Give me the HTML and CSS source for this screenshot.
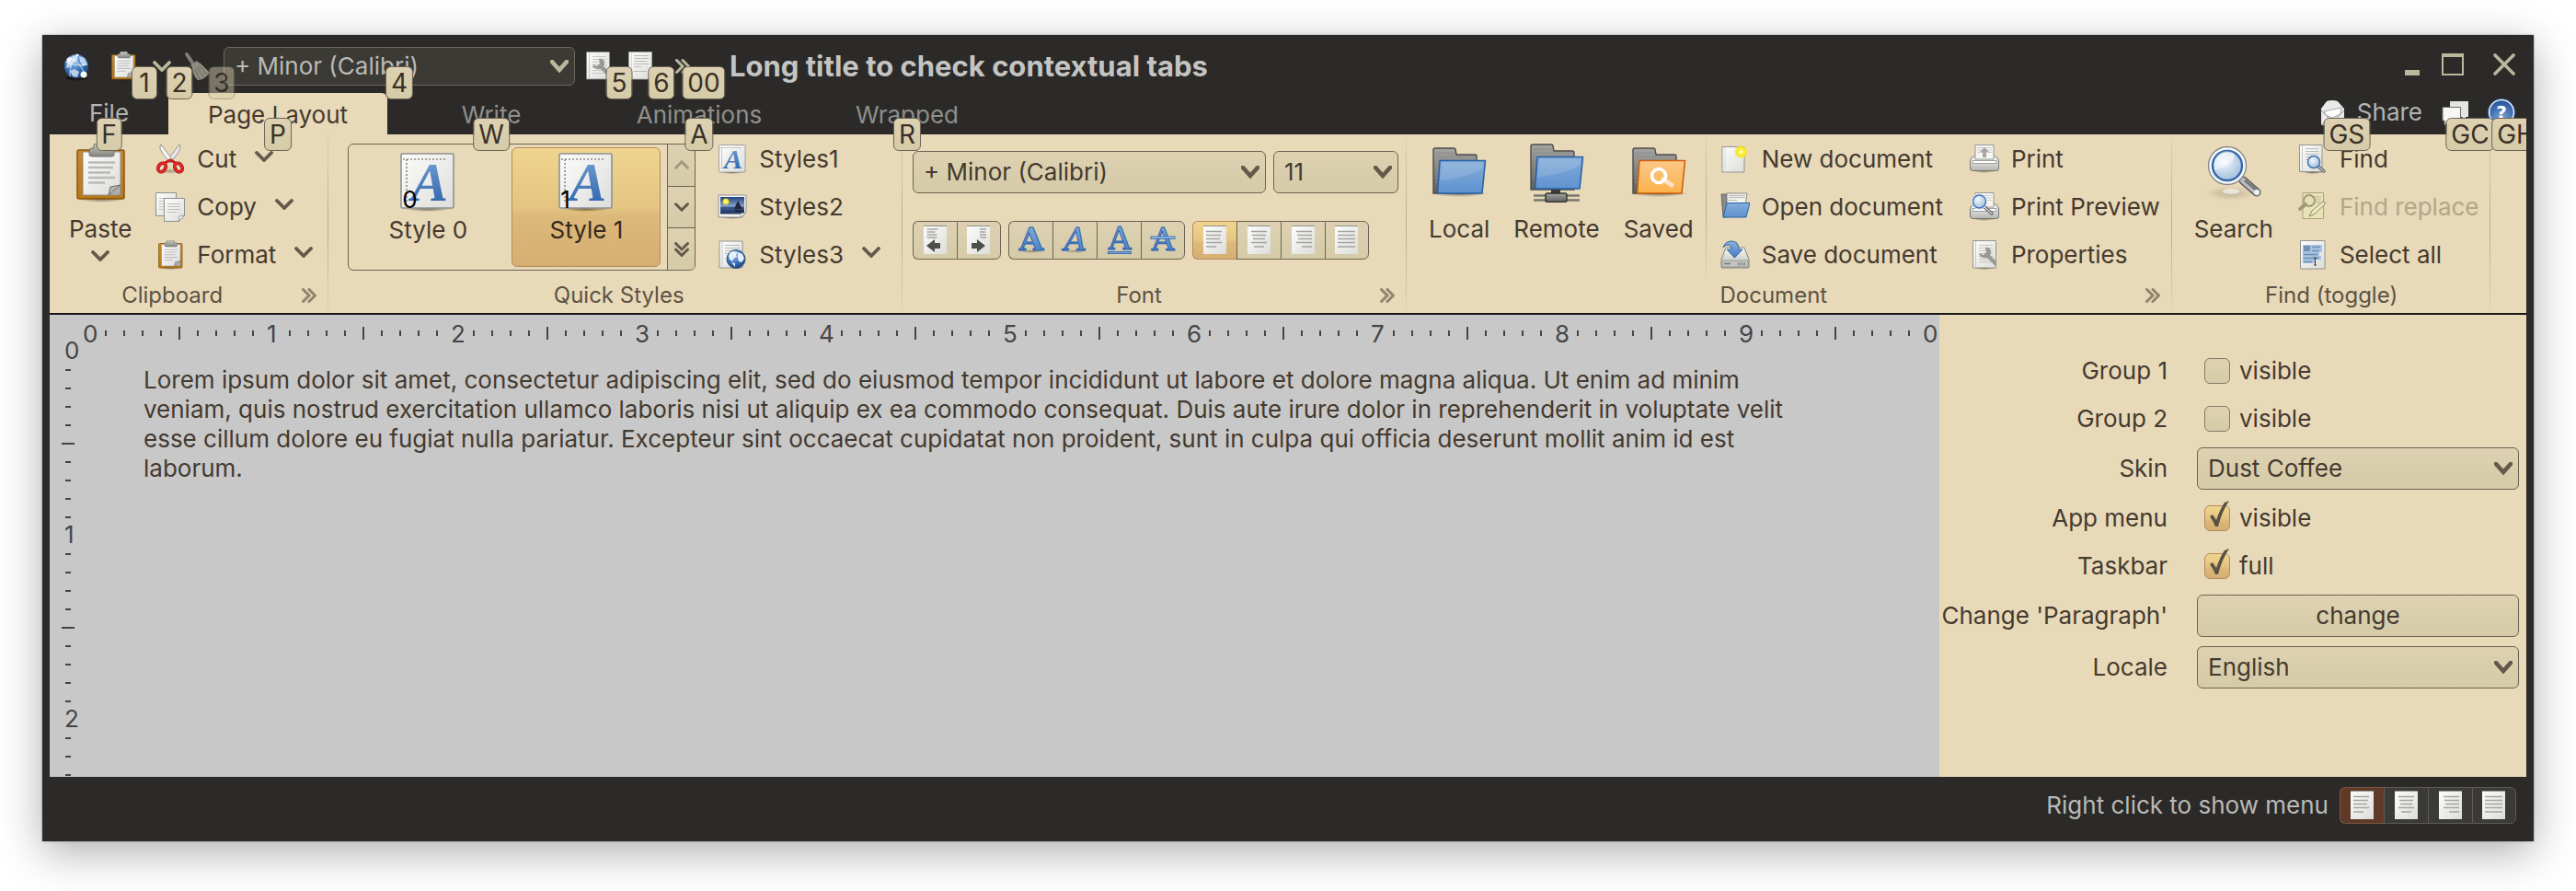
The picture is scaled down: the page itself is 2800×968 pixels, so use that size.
FILE: index.html
```html
<!DOCTYPE html>
<html lang="en">
<head>
<meta charset="utf-8">
<title>Long title to check contextual tabs</title>
<link rel="stylesheet" href="styles.css">
</head>
<body>
<svg class="sprite" aria-hidden="true">
  <defs>
    <linearGradient id="g-paper" x1="0" y1="0" x2="1" y2="1"><stop offset="0" stop-color="#fdfdfc"/><stop offset="1" stop-color="#dcdcd9"/></linearGradient>
    <linearGradient id="g-board" x1="0" y1="0" x2="0" y2="1"><stop offset="0" stop-color="#c58a2e"/><stop offset="1" stop-color="#b87818"/></linearGradient>
    <linearGradient id="g-clip" x1="0" y1="0" x2="0" y2="1"><stop offset="0" stop-color="#c9cac3"/><stop offset="1" stop-color="#83857d"/></linearGradient>
    <linearGradient id="g-blue" x1="0" y1="0" x2="0" y2="1"><stop offset="0" stop-color="#8db4de"/><stop offset="1" stop-color="#3f79c4"/></linearGradient>
    <linearGradient id="g-letter" x1="0" y1="0" x2="0" y2="1"><stop offset="0" stop-color="#7ba5d6"/><stop offset="1" stop-color="#245ca6"/></linearGradient>
    <linearGradient id="g-folder" x1="0" y1="0" x2="0" y2="1"><stop offset="0" stop-color="#84add8"/><stop offset="1" stop-color="#5f92d0"/></linearGradient>
    <linearGradient id="g-orange" x1="0" y1="0" x2="0" y2="1"><stop offset="0" stop-color="#fcc887"/><stop offset="1" stop-color="#fbb24c"/></linearGradient>
    <linearGradient id="g-gray" x1="0" y1="0" x2="0" y2="1"><stop offset="0" stop-color="#a5a5a3"/><stop offset="1" stop-color="#5e5e5c"/></linearGradient>
    <linearGradient id="g-drive" x1="0" y1="0" x2="0" y2="1"><stop offset="0" stop-color="#fafafa"/><stop offset="1" stop-color="#b4b4b0"/></linearGradient>
    <linearGradient id="g-photo" x1="0" y1="0" x2="0" y2="1"><stop offset="0" stop-color="#24437c"/><stop offset=".55" stop-color="#8aa3c9"/><stop offset=".6" stop-color="#3c5a90"/><stop offset="1" stop-color="#1d355f"/></linearGradient>
    <radialGradient id="g-globe" cx=".4" cy=".3" r=".8"><stop offset="0" stop-color="#9cc3ee"/><stop offset=".5" stop-color="#3b74bc"/><stop offset="1" stop-color="#16386f"/></radialGradient>
    <radialGradient id="g-help" cx=".5" cy=".8" r=".8"><stop offset="0" stop-color="#7fa8da"/><stop offset="1" stop-color="#1f4f96"/></radialGradient>
    <radialGradient id="g-sun"><stop offset="0" stop-color="#fff"/><stop offset=".35" stop-color="#fbf23c"/><stop offset=".7" stop-color="#f3e72b"/><stop offset="1" stop-color="#f3e72b" stop-opacity="0"/></radialGradient>
    <radialGradient id="g-lens" cx=".4" cy=".35" r=".7"><stop offset="0" stop-color="#f2f7fb"/><stop offset="1" stop-color="#9fbddd"/></radialGradient>
    <radialGradient id="g-shade"><stop offset="0" stop-color="#000" stop-opacity=".5"/><stop offset="1" stop-color="#000" stop-opacity="0"/></radialGradient>
  </defs>

  <symbol id="i-clipboard" viewBox="0 0 64 64">
    <ellipse cx="33" cy="60" rx="26" ry="4" fill="url(#g-shade)"/>
    <rect x="7" y="7" width="51" height="53" rx="2" fill="url(#g-board)" stroke="#87560e" stroke-width="1.5"/>
    <path d="M13 9h41v47H13z" fill="url(#g-paper)" stroke="#8f8b80"/>
    <path d="M19 20.500h29M19 26h27M19 31.500h24M19 37h29M19 42.500h18" stroke="#b9b9b7" stroke-width="2.400"/>
    <path d="M41 56l2-9 11-2z" fill="#b5b5b2" stroke="#6b6b68"/><path d="M54 45v11H41z" fill="#80807d" opacity=".5"/>
    <path d="M25 5V2q0-2 2-2h12q2 0 2 2v3h4q2 0 2 3v4q0 2-3 2H23q-3 0-3-2V8q0-3 2-3z" fill="url(#g-clip)" stroke="#6e7069"/>
  </symbol>

  <symbol id="i-cut" viewBox="0 0 32 32">
    <ellipse cx="16" cy="29" rx="11" ry="3" fill="url(#g-shade)" opacity=".6"/>
    <path d="M26 0c2 3 1 5-2 10l-8 10-3-3z" fill="#e9e9e7" stroke="#8a8a86" stroke-width=".9"/>
    <path d="M6 0c-2 3-1 5 2 10l8 10 3-3z" fill="#f6f6f5" stroke="#8a8a86" stroke-width=".9"/>
    <ellipse cx="7" cy="25" rx="3.800" ry="5" transform="rotate(32 7 25)" fill="none" stroke="#a40e0e" stroke-width="3.800"/>
    <ellipse cx="25" cy="25" rx="3.800" ry="5" transform="rotate(-32 25 25)" fill="none" stroke="#a40e0e" stroke-width="3.800"/>
    <path d="M10 20l6-3 6 3" fill="none" stroke="#c81b1b" stroke-width="3"/>
    <ellipse cx="7" cy="25" rx="3.800" ry="5" transform="rotate(32 7 25)" fill="none" stroke="#e42a2a" stroke-width="2.400"/>
    <ellipse cx="25" cy="25" rx="3.800" ry="5" transform="rotate(-32 25 25)" fill="none" stroke="#e42a2a" stroke-width="2.400"/>
  </symbol>

  <symbol id="i-copy" viewBox="0 0 32 32">
    <path d="M.5.500H22.500V25.500H.500z" fill="url(#g-paper)" stroke="#8f8f8c"/>
    <path d="M4 6.500h12M4 9.500h12M4 12.500h12M4 15.500h12M4 18.500h12" stroke="#c4c4c2"/>
    <path d="M9.500 6.500H31.500V25l-6 6.500H9.500z" fill="url(#g-paper)" stroke="#8f8f8c"/>
    <path d="M13 12.500h14M13 15.500h13M13 18.500h14M13 21.500h10" stroke="#bdbdbb"/>
    <path d="M25 31.500l1-5.500 5.500-1z" fill="#fff" stroke="#7c8a93" stroke-width=".8"/>
  </symbol>

  <symbol id="i-sheet" viewBox="0 0 32 32">
    <ellipse cx="16" cy="30.500" rx="13" ry="1.500" fill="url(#g-shade)"/>
    <rect x="1.500" y=".5" width="28.500" height="29.500" rx=".8" fill="url(#g-paper)" stroke="#8d9194" stroke-width=".8"/>
    <path d="M2.500 3.500h24M4.500 3.500v23" stroke="#8a8a88" stroke-width=".8" stroke-dasharray="1 1"/>
  </symbol>

  <symbol id="i-photo" viewBox="0 0 32 32">
    <ellipse cx="16" cy="27" rx="14" ry="2" fill="url(#g-shade)"/>
    <path d="M1 3h30v19l-5 5H1z" fill="#f4f4f2" stroke="#84848a" stroke-width=".9"/>
    <rect x="3" y="5" width="26" height="18.500" fill="url(#g-photo)"/>
    <circle cx="9" cy="10" r="4" fill="url(#g-sun)"/>
    <path d="M22 9l5 9h-9zM17 19h12l-2 2h-7z" fill="#20293a"/>
    <path d="M25 27v-4l6-1z" fill="#fff" stroke="#8a8a8a" stroke-width=".7"/>
  </symbol>

  <symbol id="i-web" viewBox="0 0 32 32">
    <path d="M2 1h25v29H2z" fill="url(#g-paper)" stroke="#8a8a88" stroke-width=".9"/>
    <path d="M5 1v29" stroke="#c9c9c7"/><path d="M8 5.500h16M8 8.500h16M8 11.500h16M8 14.500h8" stroke="#bcbcba"/>
    <circle cx="20" cy="20.500" r="10" fill="url(#g-globe)" stroke="#2b5086"/>
    <path d="M12 17q1-5 6-5l4 1-2 3 1 2-3 1-2 4-3-2zM22 13l5 2 2 5-3 4-3-1-1-4zM15 24l4 1v4z" fill="#eef4fa" opacity=".95"/>
  </symbol>

  <symbol id="i-folder-back" viewBox="0 0 64 64">
    <path d="M4 54V7q0-2 2-2h20q2 0 2 2l1 5h20q2 0 2 2v40z" fill="url(#g-gray)" stroke="#4c4c4a" stroke-width="1.400"/>
    <path d="M6 10h20M6 14h44M6 18h44M6 22h7M6 26h6M6 30h5M6 34h4M6 38h4M6 42h3" stroke="#8c8c8a"/>
  </symbol>
  <symbol id="i-local" viewBox="0 0 64 64">
    <ellipse cx="32" cy="54" rx="31" ry="4" fill="url(#g-shade)"/>
    <use href="#i-folder-back" width="64" height="64"/>
    <path d="M11 18.500h49.500L57 54H8.500z" fill="url(#g-folder)" stroke="#2a62a8" stroke-width="1.600" stroke-linejoin="round"/>
    <path d="M13 20.500h45l-1 7q-14 9-46 13z" fill="#fff" opacity=".13"/>
  </symbol>
  <symbol id="i-remote" viewBox="0 0 64 64">
    <g transform="translate(0 -4)">
      <use href="#i-folder-back" width="64" height="64"/>
      <path d="M11 18.500h49.500L57 53H8.500z" fill="url(#g-folder)" stroke="#2a62a8" stroke-width="1.600" stroke-linejoin="round"/>
      <path d="M13 20.500h45l-1 7q-14 9-46 13z" fill="#fff" opacity=".13"/>
    </g>
    <path d="M7 56.500h50M7 61.500h50" stroke="#77776f" stroke-width="2.400"/>
    <path d="M26 50h10v5H26z" fill="#3b3b38"/>
    <rect x="20" y="54" width="23" height="9.500" rx="2" fill="url(#g-gray)" stroke="#2f2f2d" stroke-width="1.400"/>
  </symbol>
  <symbol id="i-saved" viewBox="0 0 64 64">
    <ellipse cx="32" cy="54" rx="31" ry="4" fill="url(#g-shade)"/>
    <use href="#i-folder-back" width="64" height="64"/>
    <path d="M11 18.500h49.500L57 54H8.500z" fill="url(#g-orange)" stroke="#cf6008" stroke-width="1.600" stroke-linejoin="round"/>
    <path d="M37 39l9 6" stroke="#fde3c2" stroke-width="5" stroke-linecap="round"/>
    <circle cx="32" cy="35" r="7.500" fill="none" stroke="#fff" stroke-width="3.600"/>
  </symbol>

  <symbol id="i-new" viewBox="0 0 32 32">
    <path d="M2 2.500h24V30H2z" fill="url(#g-paper)" stroke="#8a8a88" stroke-width=".9"/>
    <path d="M5 3v27" stroke="#d8d8d6"/><circle cx="22.500" cy="8" r="7.500" fill="url(#g-sun)"/>
  </symbol>
  <symbol id="i-open" viewBox="0 0 32 32">
    <path d="M1 2h6v25H3z" fill="#8a8a87" stroke="#555" stroke-width=".8"/>
    <path d="M7 1h22l-2 14-20 12z" fill="#f2f2f0" stroke="#7d7d7a" stroke-width=".9"/>
    <path d="M9 3.500h18M9 5.500h18M8 8.500h10" stroke="#b5b5b3"/>
    <path d="M7 11.500h25L28 27H3z" fill="url(#g-folder)" stroke="#2a62a8" stroke-linejoin="round"/>
  </symbol>
  <symbol id="i-save" viewBox="0 0 32 32">
    <path d="M6 8h20l5 13v8q0 1-1 1H2q-1 0-1-1v-8z" fill="url(#g-drive)" stroke="#7b7b78" stroke-width=".9"/>
    <path d="M2 22h28v7H2z" fill="#c3c3bf" stroke="#8c8c88" stroke-width=".7"/><path d="M4 25.500h7M20 24v3.500M23 24v3.500M26 24v3.500" stroke="#777" stroke-width="1.300"/>
    <path d="M3 8Q5 1 12 1q8 0 8 9h4l-8.500 9L7 10h5q0-5-4-5-3 0-5 3z" fill="url(#g-blue)" stroke="#2b5a9c" stroke-width=".9"/>
  </symbol>
  <symbol id="i-printer" viewBox="0 0 32 32">
    <ellipse cx="16" cy="28.500" rx="13" ry="2.500" fill="url(#g-shade)"/>
    <path d="M4 13h24q3 1 3.500 5v8q0 2.500-2.500 2.500H3Q.5 28.500.5 26v-8Q1 14 4 13z" fill="url(#g-drive)" stroke="#6f6f6c" stroke-width=".9"/>
    <path d="M6 .5h20V16H6z" fill="#f5f5f4" stroke="#90908d" stroke-width=".9"/>
    <path d="M3 17.500h26v3H3z" fill="#fff" stroke="#8c8c88" stroke-width=".8"/>
    <path d="M8 3.500h16M8 6h16M8 8.500h16" stroke="#cbcbc9"/>
  </symbol>
  <symbol id="i-print" viewBox="0 0 32 32">
    <use href="#i-printer" width="32" height="32"/>
    <path d="M16 3l5 5h-3v6h-4V8h-3z" fill="#a5a5a2"/>
  </symbol>
  <symbol id="i-preview" viewBox="0 0 32 32">
    <use href="#i-printer" width="32" height="32"/>
    <path d="M15 15l9 8" stroke="#55585a" stroke-width="3.400" stroke-linecap="round"/><path d="M16 16l8 7" stroke="#d4d6d6" stroke-width="1.600" stroke-linecap="round"/>
    <circle cx="10.500" cy="10" r="7.500" fill="url(#g-lens)" stroke="#ecf1f5" stroke-width="2.400"/><circle cx="10.500" cy="10" r="7" fill="none" stroke="#3f72b4" stroke-width="1.500"/>
  </symbol>
  <symbol id="i-props" viewBox="0 0 32 32">
    <ellipse cx="16" cy="30.500" rx="12" ry="1.500" fill="url(#g-shade)"/>
    <path d="M3.500.500h25v29.500h-25z" fill="url(#g-paper)" stroke="#8a8a88" stroke-width=".9"/>
    <path d="M6.500 1v29" stroke="#c9c9c7"/><path d="M10 5.500h15M10 8.500h15M10 11.500h15M10 14.500h15M10 17.500h15M10 20.500h15M10 23.500h15" stroke="#c6c6c4"/>
    <path d="M17 8q5-1 6 4 0 3-1 4l6 6v6l-9-9q-5 1-8-2l-1-3 5 2 3-3z" fill="#989896"/>
  </symbol>
  <symbol id="i-doc" viewBox="0 0 32 32">
    <path d="M3.500.500h25v29.500h-25z" fill="url(#g-paper)" stroke="#a5a5a3" stroke-width=".9"/>
    <path d="M6.500 1v29" stroke="#d5d5d3"/><path d="M9 4.500h16M9 7.500h16M9 10.500h14M9 13.500h16M9 16.500h8M9 21.500h14" stroke="#b9b9b7"/>
  </symbol>

  <symbol id="i-search" viewBox="0 0 64 64">
    <ellipse cx="28" cy="54" rx="27" ry="8" fill="url(#g-shade)" opacity=".35"/><ellipse cx="29" cy="52" rx="9" ry="3" fill="#fff" opacity=".6"/>
    <path d="M42 40l15 13" stroke="#4e5052" stroke-width="9" stroke-linecap="round"/><path d="M42 40l15 13" stroke="#b9bbbc" stroke-width="6.500" stroke-linecap="round"/><path d="M44 40l13 11" stroke="#717375" stroke-width="2.500"/>
    <circle cx="57" cy="53" r="3" fill="#f0f0f0"/>
    <circle cx="25" cy="24" r="20.500" fill="#f6f6f6" stroke="#85888a" stroke-width="1.300"/>
    <circle cx="25" cy="24" r="16" fill="url(#g-lens)" stroke="#3569ac" stroke-width="2.400"/>
    <path d="M11 25a14 14 0 0 1 22-14q2 11-22 18z" fill="#fff" opacity=".5"/>
  </symbol>
  <symbol id="i-find" viewBox="0 0 32 32">
    <ellipse cx="16" cy="30.500" rx="12" ry="1.500" fill="url(#g-shade)"/>
    <path d="M1.500.500h24.500v29h-24.500z" fill="url(#g-paper)" stroke="#8a8a88" stroke-width=".9"/>
    <path d="M4.500 1v28" stroke="#c9c9c7"/><path d="M8 4.500h14M8 7.500h14M8 10.500h14M8 13.500h10M8 16.500h6" stroke="#bcbcba"/>
    <path d="M22 24l6 5" stroke="#55585a" stroke-width="3.400" stroke-linecap="round"/><path d="M22 24l6 5" stroke="#c4c6c6" stroke-width="1.600" stroke-linecap="round"/>
    <circle cx="17" cy="19" r="6.500" fill="url(#g-lens)" stroke="#3f72b4" stroke-width="1.500"/>
  </symbol>
  <symbol id="i-replace" viewBox="0 0 32 32">
    <path d="M5 .5h22.500v28H5z" fill="#e9e3b8" stroke="#a39b78" stroke-width=".9"/>
    <path d="M16 5h9M18 8h7M18 11h6" stroke="#b5ae8b"/>
    <circle cx="12" cy="9" r="6" fill="#e6dfb5" stroke="#9f9876" stroke-width="1.800"/><path d="M8 13l-6 5" stroke="#9f9876" stroke-width="3.600" stroke-linecap="round"/>
    <path d="M12 26l3-6L27 10q3 0 2 3L17 24z" fill="#efe9c4" stroke="#8f8868"/>
  </symbol>
  <symbol id="i-select" viewBox="0 0 32 32">
    <path d="M2.500.500H29V31H2.500z" fill="url(#g-paper)" stroke="#8a8a88" stroke-width=".9"/>
    <path d="M5 5h21v8h-3v4h2v4h-7v4H5z" fill="#a9c3e0"/><path d="M6 6h7v6H6z" fill="#7590b0"/>
    <path d="M15 7.500h9M15 11.500h8M6 15.500h15M6 19.500h17M6 23.500h9" stroke="#6f90b8" stroke-width="1.300"/><path d="M18.500 19v8M17 19h3M17 27h3" stroke="#3c3c3c"/>
  </symbol>

  <symbol id="i-outdent" viewBox="0 0 32 32">
    <path d="M3 1h25v30H3z" fill="url(#g-paper)"/><path d="M3 .5h25" stroke="#8f8f8a"/>
    <path d="M6.500 4h12M6.500 7h9M6.500 10h11M6.500 13h11" stroke="#7c7c7a" stroke-width="1.200"/><path d="M6 22l9-7v4h6v6h-6v4z" fill="#4d4f4b"/>
  </symbol>
  <symbol id="i-indent" viewBox="0 0 32 32">
    <path d="M3 1h25v30H3z" fill="url(#g-paper)"/><path d="M3 .5h25" stroke="#8f8f8a"/>
    <path d="M17 4h7M17 7h6M17 10h7M17 13h7" stroke="#7c7c7a" stroke-width="1.200"/><path d="M23 22l-9-7v4H8v6h6v4z" fill="#4d4f4b"/>
  </symbol>
  <symbol id="i-left" viewBox="0 0 32 32"><path d="M3 1h25v30H3z" fill="url(#g-paper)"/><path d="M3 .5h25" stroke="#8f8f8a"/><path d="M6 6.500h17M6 10.500h16M6 14.500h15M6 18.500h17M6 23h11" stroke="#a3a3a1" stroke-width="1.700"/></symbol>
  <symbol id="i-center" viewBox="0 0 32 32"><path d="M3 1h25v30H3z" fill="url(#g-paper)"/><path d="M3 .5h25" stroke="#8f8f8a"/><path d="M7 6.500h17M8 10.500h15M9 14.500h13M7 18.500h17M10 23h11" stroke="#a3a3a1" stroke-width="1.700"/></symbol>
  <symbol id="i-right" viewBox="0 0 32 32"><path d="M3 1h25v30H3z" fill="url(#g-paper)"/><path d="M3 .5h25" stroke="#8f8f8a"/><path d="M8 6.500h17M9 10.500h16M10 14.500h15M8 18.500h17M14 23h11" stroke="#a3a3a1" stroke-width="1.700"/></symbol>
  <symbol id="i-justify" viewBox="0 0 32 32"><path d="M3 1h25v30H3z" fill="url(#g-paper)"/><path d="M3 .5h25" stroke="#8f8f8a"/><path d="M6 6.500h19M6 10.500h19M6 14.500h19M6 18.500h19M6 23h19" stroke="#a3a3a1" stroke-width="1.700"/></symbol>

  <symbol id="i-globe" viewBox="0 0 32 32">
    <ellipse cx="16" cy="29" rx="12" ry="2.500" fill="#000" opacity=".4"/>
    <circle cx="16" cy="16" r="13" fill="url(#g-globe)"/>
    <path d="M6 11q3-6 9-7l3 3-2 4-4 1-3 5-4 1zM19 5l6 2 3 7-5 2-3-5zM9 21l5-2 5 3-2 6-5-1z" fill="#dbe9f7" opacity=".8"/>
    <path d="M4 11q12 6 24 3M9 27Q8 14 17 4M8 6q14 6 17 20" fill="none" stroke="#fff" stroke-width=".8" opacity=".9"/>
    <circle cx="24" cy="25" r="3.500" fill="#fff" opacity=".95"/><circle cx="8" cy="9" r="2.500" fill="#fff" opacity=".9"/><circle cx="17" cy="4" r="1.500" fill="#fff"/>
  </symbol>
  <symbol id="i-broom" viewBox="0 0 32 32">
    <path d="M5 3l8 12" stroke="#7e7e74" stroke-width="4" stroke-linecap="round"/>
    <path d="M9 15l7-5 4 4-7 6z" fill="#8b8b81"/><path d="M11 18l8-6 11 11q-6 8-13 8-5-4-6-13z" fill="#8d8d81"/>
    <path d="M14 19l5 11M16 17l8 11M18 15l9 10" stroke="#66665d"/>
  </symbol>
  <symbol id="i-mail" viewBox="0 0 32 32">
    <path d="M4 12L10 4q2-1 6-1t6 1l7 8v18H4z" fill="#e9e9e7"/><path d="M7 15l19-4-1 7-9 4-7-3z" fill="#fff" stroke="#a5a5a3"/>
    <path d="M4 14l9 9-9 7M29 14l-9 9 9 7" fill="none" stroke="#9c9c9a"/>
  </symbol>
  <symbol id="i-chat" viewBox="0 0 32 32">
    <path d="M10 4h20v17h-3v4l-4-4H10z" fill="#e4e4e2"/><path d="M2 10.500h19.500V25H9l-5 5v-5H2z" fill="#f7f7f6" stroke="#6e6e6c"/>
  </symbol>

  <symbol id="i-down" viewBox="0 0 20 12"><path d="M2 2l8 8 8-8" fill="none" stroke="currentColor" stroke-width="3.800" stroke-linecap="round"/></symbol>
  <symbol id="i-up" viewBox="0 0 20 12"><path d="M2 10l8-8 8 8" fill="none" stroke="currentColor" stroke-width="3.800" stroke-linecap="round"/></symbol>
  <symbol id="i-drop" viewBox="0 0 20 14"><path d="M2 2l8 9 8-9" fill="none" stroke="currentColor" stroke-width="4.600" stroke-linecap="round"/></symbol>
  <symbol id="i-more" viewBox="0 0 16 16"><path d="M1.500 1.500L8 8l-6.500 6.500M8 1.500L14.500 8 8 14.500" fill="none" stroke="currentColor" stroke-width="3" stroke-linecap="round"/></symbol>
  <symbol id="i-expand" viewBox="0 0 16 16"><path d="M1.500 1.500L8 8l6.500-6.500M1.500 8L8 14.500 14.500 8" fill="none" stroke="currentColor" stroke-width="3" stroke-linecap="round"/></symbol>
  <symbol id="i-check" viewBox="0 0 28 34"><path d="M6 17l3-2 4 6Q18 7 22 2l5-2Q19 12 15 28h-3Q9 21 6 17z" fill="currentColor"/></symbol>
</svg>

<div class="window">
  <header class="titlebar">
    <button class="slot slot-app" aria-label="Application"><svg class="icon"><use href="#i-globe"/></svg></button>
    <button class="slot" aria-label="Paste"><svg class="icon"><use href="#i-clipboard"/></svg><kbd class="tip tip-edge">1</kbd></button>
    <button class="slot slot-arrow" aria-label="Paste options"><svg class="chev"><use href="#i-down"/></svg><kbd class="tip tip-edge">2</kbd></button>
    <button class="slot slot-broom" aria-label="Format painter" disabled><svg class="icon"><use href="#i-broom"/></svg><kbd class="tip tip-edge">3</kbd></button>
    <div class="combo combo-dark">
      <select aria-label="Quick font"><option>+ Minor (Calibri)</option></select>
      <svg class="drop"><use href="#i-drop"/></svg><kbd class="tip tip-mid">4</kbd>
    </div>
    <button class="slot" aria-label="Properties"><svg class="icon"><use href="#i-props"/></svg><kbd class="tip tip-edge">5</kbd></button>
    <button class="slot" aria-label="Document"><svg class="icon"><use href="#i-doc"/></svg><kbd class="tip tip-edge">6</kbd></button>
    <button class="slot" aria-label="More"><svg class="more"><use href="#i-more"/></svg><kbd class="tip tip-edge">00</kbd></button>
    <h1 class="title">Long title to check contextual tabs</h1>
    <div class="win-buttons">
      <button aria-label="Minimize"><svg width="24" height="24"><path d="M8 18h16v6H8z" fill="currentColor"/></svg></button>
      <button aria-label="Maximize"><svg width="24" height="24"><path d="M0 0h24v24H0zM2 4v18h20V4z" fill="currentColor" fill-rule="evenodd"/></svg></button>
      <button class="close" aria-label="Close"><svg width="24" height="24"><path d="M2 2l20 20M22 2L2 22" stroke="currentColor" stroke-width="3.600" stroke-linecap="round"/></svg></button>
    </div>
  </header>

  <nav class="tabs" role="tablist">
    <button class="tab tab-file">File<kbd class="tip tip-mid">F</kbd></button>
    <button class="tab tab-active" role="tab" aria-selected="true">Page Layout<kbd class="tip tip-mid">P</kbd></button>
    <button class="tab" role="tab">Write<kbd class="tip tip-mid">W</kbd></button>
    <button class="tab" role="tab">Animations<kbd class="tip tip-mid">A</kbd></button>
    <button class="tab" role="tab">Wrapped<kbd class="tip tip-mid">R</kbd></button>
    <div class="tools">
      <button class="tool tool-share"><span class="slot-tool"><svg class="icon"><use href="#i-mail"/></svg><kbd class="tip tip-edge">GS</kbd></span>Share</button>
      <button class="tool" aria-label="Comments"><span class="slot-tool"><svg class="icon"><use href="#i-chat"/></svg><kbd class="tip tip-edge">GC</kbd></span></button>
      <button class="tool" aria-label="Help"><span class="slot-tool"><svg class="icon" viewBox="0 0 32 32"><circle cx="16" cy="16" r="13.500" fill="url(#g-help)" stroke="#f4f6f8" stroke-width="1.600"/><circle cx="16" cy="16" r="14.800" fill="none" stroke="#2f5f9f"/><text class="glyph-help" x="16" y="23">?</text></svg><kbd class="tip tip-edge">GH</kbd></span></button>
    </div>
  </nav>

  <section class="ribbon">
    <div class="group group-clipboard">
      <div class="body">
        <button class="large"><svg class="icon-lg"><use href="#i-clipboard"/></svg><span>Paste</span><svg class="chev"><use href="#i-down"/></svg></button>
        <div class="list">
          <button class="row"><svg class="icon"><use href="#i-cut"/></svg>Cut<svg class="chev"><use href="#i-down"/></svg></button>
          <button class="row"><svg class="icon"><use href="#i-copy"/></svg>Copy<svg class="chev"><use href="#i-down"/></svg></button>
          <button class="row"><svg class="icon"><use href="#i-clipboard"/></svg>Format<svg class="chev"><use href="#i-down"/></svg></button>
        </div>
      </div>
      <footer class="foot"><span>Clipboard</span><button class="launch" aria-label="Clipboard options"><svg class="more"><use href="#i-more"/></svg></button></footer>
    </div>

    <div class="group group-styles">
      <div class="body">
        <div class="gallery">
          <div class="items">
            <button class="style"><span class="thumb"><svg class="icon-lg" viewBox="0 0 32 32"><use href="#i-sheet" width="32" height="32"/><text class="glyph-style" x="17" y="26">A</text></svg><b>0</b></span>Style 0</button>
            <button class="style style-on"><span class="thumb"><svg class="icon-lg" viewBox="0 0 32 32"><use href="#i-sheet" width="32" height="32"/><text class="glyph-style" x="17" y="26">A</text></svg><b>1</b></span>Style 1</button>
          </div>
          <div class="scroll">
            <button aria-label="Up" disabled><svg class="arrow"><use href="#i-up"/></svg></button>
            <button aria-label="Down"><svg class="arrow"><use href="#i-down"/></svg></button>
            <button aria-label="Expand"><svg class="more"><use href="#i-expand"/></svg></button>
          </div>
        </div>
        <div class="list">
          <button class="row"><svg class="icon" viewBox="0 0 32 32"><use href="#i-sheet" width="32" height="32"/><text class="glyph-style" x="17" y="26">A</text></svg>Styles1</button>
          <button class="row"><svg class="icon"><use href="#i-photo"/></svg>Styles2</button>
          <button class="row"><svg class="icon"><use href="#i-web"/></svg>Styles3<svg class="chev"><use href="#i-down"/></svg></button>
        </div>
      </div>
      <footer class="foot"><span>Quick Styles</span></footer>
    </div>

    <div class="group group-font">
      <div class="body body-font">
        <div class="line">
          <div class="combo combo-face"><select aria-label="Font"><option>+ Minor (Calibri)</option></select><svg class="drop"><use href="#i-drop"/></svg></div>
          <div class="combo combo-size"><select aria-label="Size"><option>11</option></select><svg class="drop"><use href="#i-drop"/></svg></div>
        </div>
        <div class="line">
          <div class="set"><button aria-label="Outdent"><svg class="icon"><use href="#i-outdent"/></svg></button><button aria-label="Indent"><svg class="icon"><use href="#i-indent"/></svg></button></div>
          <div class="set">
            <button aria-label="Bold"><svg class="icon" viewBox="0 0 32 32"><ellipse cx="16" cy="28" rx="13" ry="2" fill="url(#g-shade)" opacity=".6"/><text class="glyph-font glyph-bold" x="16" y="27">A</text></svg></button>
            <button aria-label="Italic"><svg class="icon" viewBox="0 0 32 32"><ellipse cx="16" cy="28" rx="13" ry="2" fill="url(#g-shade)" opacity=".6"/><text class="glyph-font glyph-italic" x="16" y="27">A</text></svg></button>
            <button aria-label="Underline"><svg class="icon" viewBox="0 0 32 32"><text class="glyph-font" x="16" y="26">A</text><rect x="3.500" y="28.500" width="25" height="2" fill="#7ea7dc" stroke="#2a5fae" stroke-width=".8"/></svg></button>
            <button aria-label="Strike"><svg class="icon" viewBox="0 0 32 32"><text class="glyph-font" x="16" y="27">A</text><rect x="3" y="12" width="26" height="2.400" fill="#9dbfe8" stroke="#2a5fae" stroke-width=".8"/></svg></button>
          </div>
          <div class="set"><button class="on" aria-label="Left"><svg class="icon"><use href="#i-left"/></svg></button><button aria-label="Center"><svg class="icon"><use href="#i-center"/></svg></button><button aria-label="Right"><svg class="icon"><use href="#i-right"/></svg></button><button aria-label="Justify"><svg class="icon"><use href="#i-justify"/></svg></button></div>
        </div>
      </div>
      <footer class="foot"><span>Font</span><button class="launch" aria-label="Font options"><svg class="more"><use href="#i-more"/></svg></button></footer>
    </div>

    <div class="group group-document">
      <div class="body">
        <button class="large"><svg class="icon-lg"><use href="#i-local"/></svg><span>Local</span></button>
        <button class="large"><svg class="icon-lg"><use href="#i-remote"/></svg><span>Remote</span></button>
        <button class="large"><svg class="icon-lg"><use href="#i-saved"/></svg><span>Saved</span></button>
        <div class="list list-split">
          <button class="row"><svg class="icon"><use href="#i-new"/></svg>New document</button>
          <button class="row"><svg class="icon"><use href="#i-open"/></svg>Open document</button>
          <button class="row"><svg class="icon"><use href="#i-save"/></svg>Save document</button>
        </div>
        <div class="list">
          <button class="row"><svg class="icon"><use href="#i-print"/></svg>Print</button>
          <button class="row"><svg class="icon"><use href="#i-preview"/></svg>Print Preview</button>
          <button class="row"><svg class="icon"><use href="#i-props"/></svg>Properties</button>
        </div>
      </div>
      <footer class="foot"><span>Document</span><button class="launch" aria-label="Document options"><svg class="more"><use href="#i-more"/></svg></button></footer>
    </div>

    <div class="group group-find">
      <div class="body">
        <button class="large"><svg class="icon-lg"><use href="#i-search"/></svg><span>Search</span></button>
        <div class="list">
          <button class="row"><svg class="icon"><use href="#i-find"/></svg>Find</button>
          <button class="row" disabled><svg class="icon"><use href="#i-replace"/></svg>Find replace</button>
          <button class="row"><svg class="icon"><use href="#i-select"/></svg>Select all</button>
        </div>
      </div>
      <footer class="foot"><span>Find (toggle)</span></footer>
    </div>
  </section>

  <main class="main">
    <div class="page">
      <div class="ruler-x" aria-hidden="true"><span>0</span><span>1</span><span>2</span><span>3</span><span>4</span><span>5</span><span>6</span><span>7</span><span>8</span><span>9</span><span class="last">0</span></div>
      <div class="ruler-y" aria-hidden="true"><span>0</span><span>1</span><span>2</span></div>
      <p class="text">Lorem ipsum dolor sit amet, consectetur adipiscing elit, sed do eiusmod tempor incididunt ut labore et dolore magna aliqua. Ut enim ad minim veniam, quis nostrud exercitation ullamco laboris nisi ut aliquip ex ea commodo consequat. Duis aute irure dolor in reprehenderit in voluptate velit esse cillum dolore eu fugiat nulla pariatur. Excepteur sint occaecat cupidatat non proident, sunt in culpa qui officia deserunt mollit anim id est laborum.</p>
    </div>
    <form class="panel">
      <label class="name" for="g1">Group 1</label>
      <div class="check"><input type="checkbox" id="g1"><svg class="tick"><use href="#i-check"/></svg><label for="g1">visible</label></div>
      <label class="name" for="g2">Group 2</label>
      <div class="check"><input type="checkbox" id="g2"><svg class="tick"><use href="#i-check"/></svg><label for="g2">visible</label></div>
      <label class="name" for="skin">Skin</label>
      <div class="combo"><select id="skin"><option>Dust Coffee</option></select><svg class="drop"><use href="#i-drop"/></svg></div>
      <label class="name" for="menu">App menu</label>
      <div class="check"><input type="checkbox" id="menu" checked><svg class="tick"><use href="#i-check"/></svg><label for="menu">visible</label></div>
      <label class="name" for="task">Taskbar</label>
      <div class="check"><input type="checkbox" id="task" checked><svg class="tick"><use href="#i-check"/></svg><label for="task">full</label></div>
      <label class="name" for="para">Change 'Paragraph'</label>
      <button class="push" id="para" type="button">change</button>
      <label class="name" for="locale">Locale</label>
      <div class="combo"><select id="locale"><option>English</option></select><svg class="drop"><use href="#i-drop"/></svg></div>
    </form>
  </main>

  <footer class="status">
    <span>Right click to show menu</span>
    <div class="set set-dark"><button class="on" aria-label="Left"><svg class="icon"><use href="#i-left"/></svg></button><button aria-label="Center"><svg class="icon"><use href="#i-center"/></svg></button><button aria-label="Right"><svg class="icon"><use href="#i-right"/></svg></button><button aria-label="Justify"><svg class="icon"><use href="#i-justify"/></svg></button></div>
  </footer>
</div>
</body>
</html>
```
FILE: styles.css
```css
:root {
  --dark: #2b2a28;
  --sand: #e8d9b8;
  --ink: #443a2f;
  --line: #6d6454;
  --face: linear-gradient(#ddd1b1, #d5cba8);
  --hot: linear-gradient(#efd58f, #e4c581 50%, #dcb97b 58%, #d6ae72);
}

* { box-sizing: border-box; }

body {
  margin: 0;
  min-height: 100vh;
  padding: 38px 46px 54px;
  display: flex;
  background: #fff;
  color: var(--ink);
  font: 26px/32px Inter, "Liberation Sans", sans-serif;
}

button, select, input { font: inherit; color: inherit; margin: 0; }
button { padding: 0; border: 0; background: none; white-space: nowrap; }
svg { display: block; flex: none; }

.sprite { position: absolute; width: 0; height: 0; }
.icon { width: 32px; height: 32px; overflow: visible; }
.icon-lg { width: 64px; height: 64px; overflow: visible; }
.chev { width: 20px; height: 12px; color: #645a4c; }
.more, .arrow { width: 16px; height: 16px; }

/* letters inside icons */
.glyph-style { font: italic bold 30px "Liberation Serif", serif; text-anchor: middle; fill: url(#g-letter); }
.glyph-font { font: 34px "DejaVu Serif", serif; text-anchor: middle; fill: url(#g-blue); stroke: #2a5fae; stroke-width: 1px; }
.glyph-bold { font-weight: bold; }
.glyph-italic { font-style: italic; }
.glyph-help { font: bold 20px "DejaVu Sans", sans-serif; text-anchor: middle; fill: #fff; }

.window {
  flex: 1;
  min-width: 0;
  display: flex;
  flex-direction: column;
  padding: 0 8px;
  background: var(--dark);
  box-shadow: 0 0 2px rgba(0, 0, 0, .4), 0 12px 44px rgba(0, 0, 0, .32);
}

/* key tips */
.tip {
  position: absolute;
  z-index: 2;
  height: 36px;
  min-width: 28px;
  padding: 0 5px;
  border: 1px solid var(--line);
  border-radius: 6px;
  background: var(--face);
  color: #3a3027;
  font: 28px/34px Inter, "Liberation Sans", sans-serif;
  text-align: center;
  transform: translateX(-50%);
}
.tip-edge { left: 100%; }
.tip-mid { left: 50%; }

/* title bar */
.titlebar { height: 60px; padding-top: 8px; display: flex; align-items: center; }
.slot {
  position: relative;
  width: 46px;
  height: 52px;
  display: flex;
  align-items: center;
  justify-content: center;
  color: #b8b89c;
}
.slot-app { width: 57px; }
.slot-arrow { width: 38px; }
.slot-broom { padding-right: 8px; }
.slot .chev, .slot .more { color: #b8b89c; }
.slot .tip { top: 26px; }
.slot:disabled .tip { opacity: .45; }
.title { margin: 0 0 0 28px; flex: 1; font-size: 31px; line-height: 36px; font-weight: 700; color: #c4c4c2; white-space: nowrap; }
.win-buttons { display: flex; gap: 8px; padding: 0 12px 4px 0; color: #b8b89c; }
.win-buttons button { width: 40px; display: flex; justify-content: flex-end; }
.win-buttons .close { width: 48px; }

/* combo boxes */
.combo { position: relative; height: 46px; }
.combo select {
  width: 100%;
  height: 100%;
  padding: 0 40px 0 11px;
  appearance: none;
  border: 1px solid var(--line);
  border-radius: 6px;
  background: var(--face);
}
.drop { position: absolute; right: 7px; top: 50%; margin-top: -7px; width: 20px; height: 14px; color: #645a4c; pointer-events: none; }
.combo-dark { width: 382px; height: 42px; margin: 0 2px; }
.combo-dark select { border-color: #6a6962; background: #3b3a35; color: #b9b9b5; }
.combo-dark .drop { color: #b8b89c; }
.combo-dark .tip { top: 21px; }

/* tabs */
.tabs { height: 48px; display: flex; color: #8f8f8c; }
.tab { position: relative; width: 226px; padding-top: 5px; }
.tab-file { width: 129px; padding-top: 2px; color: #b4b4b1; }
.tab-active { width: 238px; margin-top: 3px; padding-top: 2px; border-radius: 6px 6px 0 0; background: var(--sand); color: var(--ink); }
.tab .tip { top: 30px; }
.tab-active .tip { top: 27px; }
.tools { flex: 1; display: flex; justify-content: flex-end; color: #b4b4b1; clip-path: inset(0 0 -30px 0); }
.tool { display: flex; align-items: center; margin-right: 18px; height: 48px; }
.tool:last-child { margin-right: 11px; }
.tool-share { gap: 11px; margin-right: 20px; }
.slot-tool { position: relative; }
.slot-tool .tip { top: 22px; }

/* ribbon */
.ribbon { display: flex; height: 196px; border-bottom: 2px solid #17171a; background: var(--sand); }
.group {
  display: flex;
  flex-direction: column;
  padding: 0 4px 0 11px;
  border-right: 1px solid;
  border-image: linear-gradient(rgba(170, 165, 120, .1), rgba(170, 165, 120, .8) 50%, rgba(170, 165, 120, .1)) 1;
}
.group-clipboard { padding: 0 6px 0 8px; }
.group-styles { padding: 0 13px 0 21px; }
.group-font { padding-right: 8px; }
.group-document { padding-right: 2px; }
.group-find { padding-right: 1px; }
.body { height: 156px; display: flex; }
.foot { height: 38px; display: flex; align-items: center; font-size: 24px; color: #5d5243; }
.foot span { flex: 1; text-align: center; }
.launch { padding: 0 4px 0 16px; color: #8f856f; }
.group-clipboard .launch { padding-right: 6px; }
.group-document .launch { padding-right: 10px; }
.group-find .foot { padding-right: 8px; }

.large { display: flex; flex-direction: column; align-items: center; padding: 10px 13px 0; }
.large span { margin: 13px 0 7px; }
.list { display: flex; flex-direction: column; }
.list-split {
  margin-right: 9px;
  padding-left: 5px;
  border-left: 1px solid;
  border-image: linear-gradient(rgba(170, 165, 120, .1), rgba(170, 165, 120, .8) 50%, rgba(170, 165, 120, .1)) 1;
}
.group-clipboard .list { margin-left: 3px; }
.group-find .list { margin-left: 4px; }
.row { height: 52px; padding: 2px 10px 0; display: flex; align-items: center; gap: 13px; }
.row .chev { margin: -6px 0 0 7px; }
.row:disabled { color: #b3a68b; }

.gallery { display: flex; margin: 10px 14px 8px 0; border: 1px solid var(--line); border-radius: 6px; overflow: hidden; }
.items { display: flex; gap: 10px; padding: 3px 7px 3px 5px; }
.style { width: 162px; border: 1px solid transparent; border-radius: 6px; display: flex; flex-direction: column; align-items: center; padding-top: 5px; gap: 4px; }
.style-on { border-color: #b98a5c; background: var(--hot); color: #33291c; }
.thumb { position: relative; }
.thumb b { position: absolute; left: 4px; bottom: -3px; font-weight: 400; color: #000; }
.scroll { width: 30px; display: flex; flex-direction: column; border-left: 1px solid var(--line); }
.scroll button { flex: 1; display: flex; align-items: center; justify-content: center; background: var(--face); color: #645a4c; }
.scroll button + button { border-top: 1px solid var(--line); }
.scroll button:disabled { color: #a1977e; }

.body-font { flex-direction: column; gap: 30px; padding-top: 18px; }
.line { display: flex; gap: 8px; }
.combo-face { width: 384px; }
.combo-size { width: 136px; }
.set { display: flex; height: 42px; }
.set button { width: 48px; display: flex; align-items: center; justify-content: center; border: 1px solid var(--line); border-right-width: 0; background: var(--face); }
.set button:first-child { border-radius: 6px 0 0 6px; }
.set button:last-child { border-right-width: 1px; border-radius: 0 6px 6px 0; }
.set .on { border-color: #b98a5c; background: var(--hot); }

/* work area */
.main { flex: 1; min-height: 0; display: flex; }
.page {
  flex: 1;
  min-width: 0;
  display: grid;
  grid-template: 29px 1fr / 34px 1fr;
  overflow: hidden;
  background: #c8c8c8;
  color: #454545;
}
.ruler-x { grid-column: 2; display: flex; height: 40px; overflow: hidden; }
.ruler-x span { flex: none; width: 200px; display: flex; padding: 5px 0 0 2px; }
.ruler-x span::after {
  content: "";
  width: 174px;
  height: 14px;
  margin: 8px 0 0 auto;
  background:
    linear-gradient(90deg, currentColor 2px, transparent 0) 0 4px / 20px 6px repeat-x,
    linear-gradient(currentColor, currentColor) 80px 0 / 2px 14px no-repeat;
}
.ruler-x .last { width: 20px; }
.ruler-x .last::after { display: none; }
.ruler-y { grid-column: 1; grid-row: 2; contain: size; overflow: hidden; padding-left: 13px; }
.ruler-y span { display: flex; flex-direction: column; height: 200px; padding-left: 3px; line-height: 20px; }
.ruler-y span::after {
  content: "";
  width: 14px;
  height: 170px;
  margin: auto 0 0 -3px;
  background:
    linear-gradient(currentColor 2px, transparent 0) 4px 0 / 6px 20px repeat-y,
    linear-gradient(currentColor, currentColor) 0 80px / 14px 2px no-repeat;
}
.text { grid-column: 2; grid-row: 2; margin: 26px 130px 0 68px; color: var(--ink); }

.panel {
  width: 638px;
  display: grid;
  grid-template-columns: 1fr 350px;
  grid-template-rows: 52px 52px 56px 52px 52px 56px 56px;
  align-content: start;
  align-items: center;
  column-gap: 32px;
  padding: 35px 8px 0 2px;
  background: var(--sand);
}
.name { text-align: right; white-space: nowrap; }
.check { position: relative; display: flex; align-items: center; gap: 10px; padding-left: 8px; }
.check input { width: 28px; height: 28px; appearance: none; border: 1px solid #857a66; border-radius: 6px; background: var(--face); }
.check input:checked { border-color: #b98a5c; background: var(--hot); }
.tick { display: none; position: absolute; left: 8px; top: -3px; width: 28px; height: 34px; color: #5c5243; pointer-events: none; }
.check input:checked + .tick { display: block; }
.push { height: 46px; border: 1px solid var(--line); border-radius: 6px; background: var(--face); }

/* status bar */
.status { height: 70px; display: flex; align-items: center; justify-content: flex-end; gap: 12px; padding: 0 11px 8px 0; color: #b9b9b7; }
.set-dark { height: 40px; }
.set-dark button { border-color: #5c5b56; background: #3b3a36; }
.set-dark .on { border-color: #7a5645; background: #5f3a29; }
```
